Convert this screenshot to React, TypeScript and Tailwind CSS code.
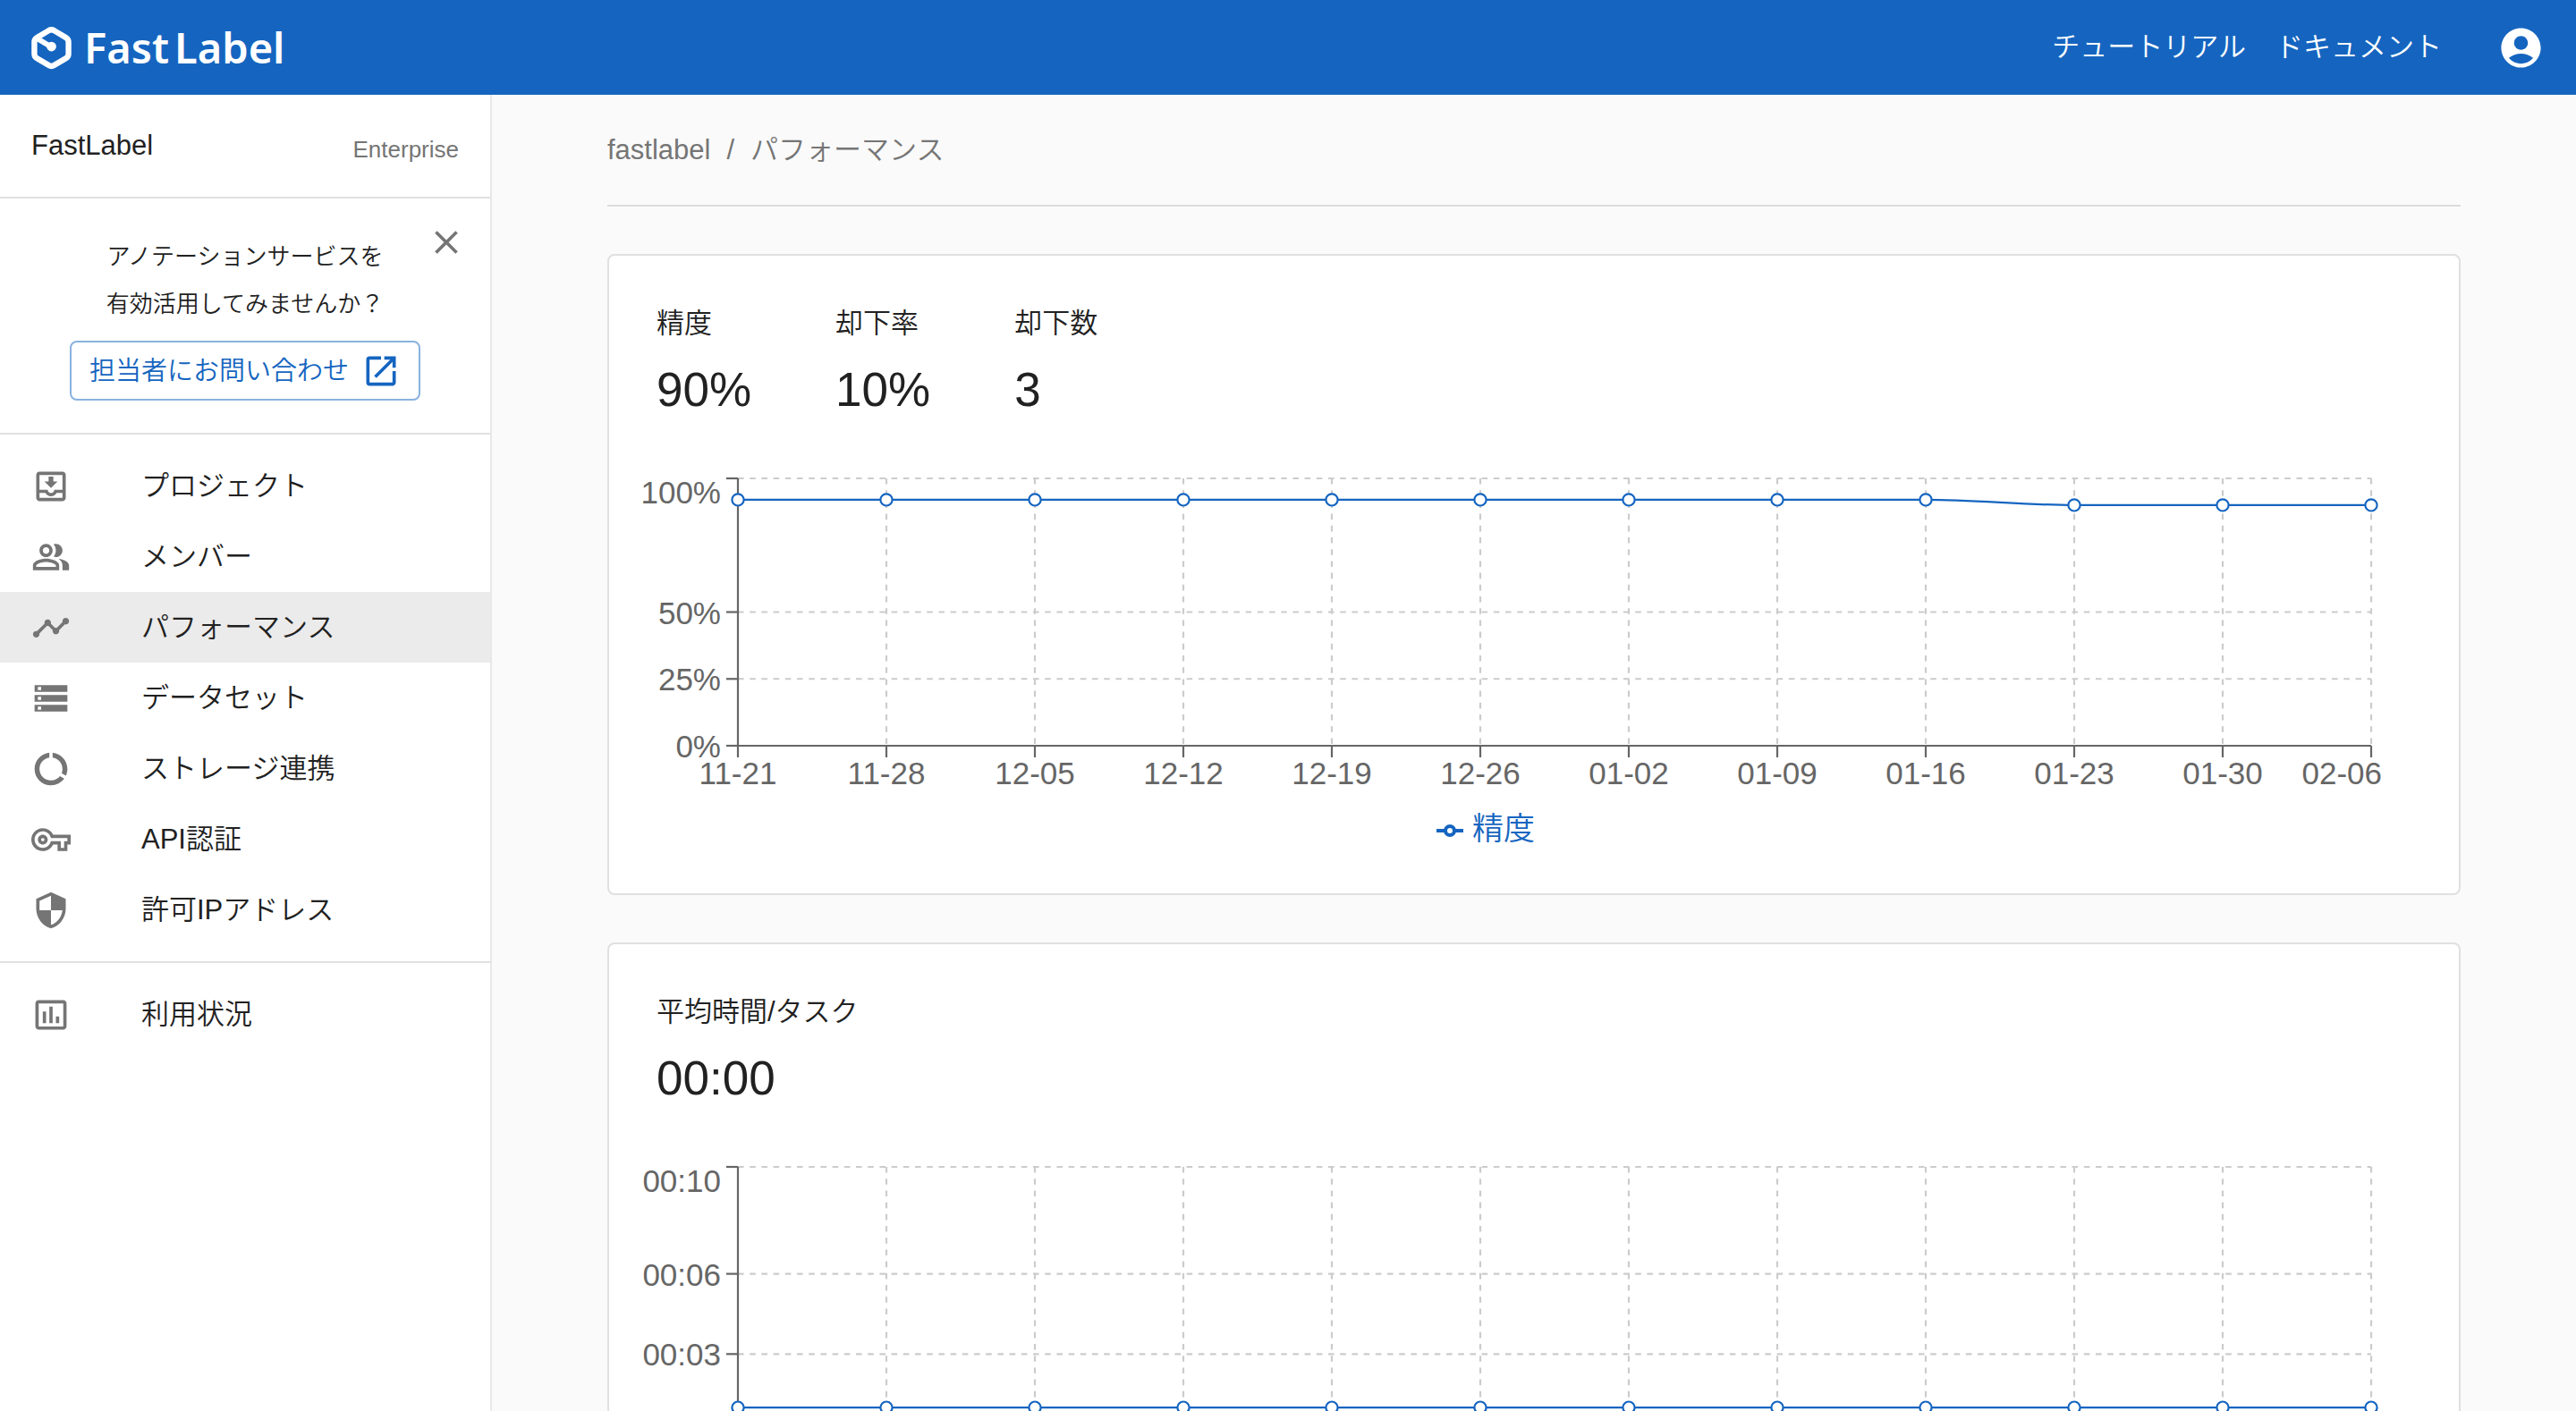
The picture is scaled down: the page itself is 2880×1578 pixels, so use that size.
import React from "react";
import type { IconType } from "react-icons";
import {
  MdAccountCircle,
  MdClose,
  MdDataUsage,
  MdInsertChartOutlined,
  MdOpenInNew,
  MdOutlineMoveToInbox,
  MdOutlinePeopleAlt,
  MdOutlineVpnKey,
  MdSecurity,
  MdStorage,
  MdTimeline,
} from "react-icons/md";

type NavItem = { label: string; icon: IconType; active?: boolean };

const mainNav: NavItem[] = [
  { label: "プロジェクト", icon: MdOutlineMoveToInbox },
  { label: "メンバー", icon: MdOutlinePeopleAlt },
  { label: "パフォーマンス", icon: MdTimeline, active: true },
  { label: "データセット", icon: MdStorage },
  { label: "ストレージ連携", icon: MdDataUsage },
  { label: "API認証", icon: MdOutlineVpnKey },
  { label: "許可IPアドレス", icon: MdSecurity },
];

const usageNav: NavItem[] = [{ label: "利用状況", icon: MdInsertChartOutlined }];

const dates = [
  "11-21", "11-28", "12-05", "12-12", "12-19", "12-26",
  "01-02", "01-09", "01-16", "01-23", "01-30", "02-06",
];

function Logo() {
  return (
    <a href="#home" aria-label="FastLabel" className="flex items-center gap-[14px] text-white">
      <svg viewBox="0 0 46 50" className="h-[49px] w-[45px]" fill="none" stroke="currentColor">
        <path
          d="M20 5.200 6.500 13.300Q3.500 15 3.500 18.500V32Q3.500 35.300 6.500 37L20 45Q23 46.800 26 45L39.500 37Q42.500 35.300 42.500 32V18.500Q42.500 15 39.500 13.300L26 5.200Q23 3.500 20 5.200Z"
          strokeWidth="6.500"
          strokeLinejoin="round"
        />
        <path d="M7 14.500 22 23.500" strokeWidth="6" />
        <circle cx="23" cy="23.500" r="5.500" fill="currentColor" stroke="none" />
      </svg>
      <span className="flex gap-[6px] font-['Noto_Sans',sans-serif] text-[47px] leading-[56px] font-semibold">
        <span>Fast</span>
        <span>Label</span>
      </span>
    </a>
  );
}

function NavList({ items, label }: { items: NavItem[]; label: string }) {
  return (
    <nav aria-label={label}>
      <ul>
        {items.map(({ label: text, icon: Icon, active }) => (
          <li key={text}>
            <a
              href="#nav"
              aria-current={active ? "page" : undefined}
              className={
                active
                  ? "flex h-[79px] items-center bg-[#ebebeb] px-[35px]"
                  : "flex h-[79px] items-center px-[35px]"
              }
            >
              <span className="w-[123px] shrink-0">
                <Icon className="size-[44px] text-[#757575]" />
              </span>
              <span className="text-[31px] leading-[46px]">{text}</span>
            </a>
          </li>
        ))}
      </ul>
    </nav>
  );
}

function Sidebar() {
  return (
    <aside className="w-[550px] shrink-0 border-r-2 border-[#e8e8e8] bg-white">
      <div className="flex items-end justify-between border-b-2 border-[#e0e0e0] px-[35px] py-[34px]">
        <p className="text-[31px] leading-[46px]">FastLabel</p>
        <p className="text-[26px] leading-[38px] text-[#757575]">Enterprise</p>
      </div>
      <div className="relative flex flex-col items-center border-b-2 border-[#e0e0e0] pt-[39px] pb-9">
        <p className="text-center text-[26px] leading-[53px]">
          アノテーションサービスを
          <br />
          有効活用してみませんか？
        </p>
        <button
          type="button"
          className="mt-[14px] flex h-[67px] items-center gap-[14px] rounded-lg border-2 border-[#8ab2df] px-5 text-[29px] leading-[50px] text-[#1565c0]"
        >
          担当者にお問い合わせ
          <MdOpenInNew className="size-[44px]" />
        </button>
        <button type="button" aria-label="閉じる" className="absolute top-[27px] right-[27px] text-[#757575]">
          <MdClose className="size-[44px]" />
        </button>
      </div>
      <div className="border-b-2 border-[#e0e0e0] py-[18px]">
        <NavList items={mainNav} label="メイン" />
      </div>
      <div className="py-[18px]">
        <NavList items={usageNav} label="利用" />
      </div>
    </aside>
  );
}

const LEFT = 144;
const RIGHT = 1970;
const TOP = 68;
const BOTTOM = 367;

type ChartProps = {
  title: string;
  max: number;
  ticks: { value: number; label: string }[];
  values: number[];
};

function LineChart({ title, max, ticks, values }: ChartProps) {
  const x = (i: number) => LEFT + i * ((RIGHT - LEFT) / (dates.length - 1));
  const y = (v: number) => BOTTOM - (v / max) * (BOTTOM - TOP);

  const path = values
    .map((v, i) => {
      if (i === 0) return `M${x(0)},${y(v)}`;
      const third = (x(i) - x(i - 1)) / 3;
      return `C${x(i - 1) + third},${y(values[i - 1])},${x(i) - third},${y(v)},${x(i)},${y(v)}`;
    })
    .join("");

  return (
    <svg viewBox="0 1 2068 531" className="block h-auto w-full" role="img" aria-label={title}>
      <g stroke="#ccc" strokeWidth="2.2" strokeDasharray="6.6 6.6">
        {ticks
          .filter((t) => t.value > 0)
          .map((t) => (
            <line key={t.label} x1={LEFT} x2={RIGHT} y1={y(t.value)} y2={y(t.value)} />
          ))}
        {dates.slice(1).map((d, i) => (
          <line key={d} x1={x(i + 1)} x2={x(i + 1)} y1={TOP} y2={BOTTOM} />
        ))}
      </g>
      <g stroke="#666" strokeWidth="2.2">
        <line x1={LEFT} x2={LEFT} y1={TOP} y2={BOTTOM} />
        <line x1={LEFT} x2={RIGHT} y1={BOTTOM} y2={BOTTOM} />
        {ticks.map((t) => (
          <line key={t.label} x1={LEFT - 13} x2={LEFT} y1={y(t.value)} y2={y(t.value)} />
        ))}
        {dates.map((d, i) => (
          <line key={d} x1={x(i)} x2={x(i)} y1={BOTTOM} y2={BOTTOM + 13} />
        ))}
      </g>
      <g fill="#666" className="text-[35px]">
        {ticks.map((t) => (
          <text key={t.label} x={LEFT - 19} y={y(t.value) + (t.value === max ? 28 : 13)} textAnchor="end">
            {t.label}
          </text>
        ))}
        {dates.map((d, i) =>
          i === dates.length - 1 ? (
            <text key={d} x={RIGHT + 12} y={BOTTOM + 43} textAnchor="end">
              {d}
            </text>
          ) : (
            <text key={d} x={x(i)} y={BOTTOM + 43} textAnchor="middle">
              {d}
            </text>
          ),
        )}
      </g>
      <path d={path} fill="none" stroke="#1565c0" strokeWidth="2.2" />
      <g fill="#fff" stroke="#1565c0" strokeWidth="2.2">
        {values.map((v, i) => (
          <circle key={dates[i]} cx={x(i)} cy={y(v)} r="6.6" />
        ))}
      </g>
      <g fill="none" stroke="#1565c0" strokeWidth="4">
        <path d="M925 462H935M945 462H955" />
        <circle cx="940" cy="462" r="5" />
      </g>
      <text x="965" y="472" fill="#1565c0" className="text-[35px]">
        {title}
      </text>
    </svg>
  );
}

type CardProps = { stats: { label: string; value: string }[]; chart: ChartProps };

function ChartCard({ stats, chart }: CardProps) {
  return (
    <section className="rounded-lg border-2 border-[#e0e0e0] bg-white">
      <dl className="flex gap-[94px] px-[53px] pt-[54px]">
        {stats.map((s) => (
          <div key={s.label} className="flex flex-col gap-5">
            <dt className="text-[31px] leading-[44px]">{s.label}</dt>
            <dd className="text-[53px] leading-[64px]">{s.value}</dd>
          </div>
        ))}
      </dl>
      <LineChart {...chart} />
    </section>
  );
}

export default function App() {
  return (
    <div
      lang="ja"
      className="flex h-screen flex-col overflow-hidden bg-[#fafafa] font-['Liberation_Sans','Noto_Sans_CJK_JP',sans-serif] font-[350] text-[#212121]"
    >
      <header className="flex h-[106px] shrink-0 items-center justify-between bg-[#1565c0] px-[35px] text-white">
        <Logo />
        <div className="flex items-center">
          <nav aria-label="ヘルプ" className="flex gap-[33px] text-[31px] leading-[46px]">
            <a href="#tutorial">チュートリアル</a>
            <a href="#docs">ドキュメント</a>
          </nav>
          <button type="button" aria-label="アカウント" className="ml-[62px]">
            <MdAccountCircle className="size-[53px]" />
          </button>
        </div>
      </header>
      <div className="flex min-h-0 flex-1">
        <Sidebar />
        <main className="min-w-0 flex-1 overflow-y-auto px-[129px] [scrollbar-width:none]">
          <nav
            aria-label="パンくず"
            className="flex gap-[18px] border-b-2 border-[#dcdcdc] pt-[39px] pb-[38px] text-[31px] leading-[46px] text-[#757575]"
          >
            <a href="#fastlabel">fastlabel</a>
            <span>/</span>
            <span>パフォーマンス</span>
          </nav>
          <div className="flex flex-col gap-[53px] py-[53px]">
            <ChartCard
              stats={[
                { label: "精度", value: "90%" },
                { label: "却下率", value: "10%" },
                { label: "却下数", value: "3" },
              ]}
              chart={{
                title: "精度",
                max: 100,
                ticks: [
                  { value: 100, label: "100%" },
                  { value: 50, label: "50%" },
                  { value: 25, label: "25%" },
                  { value: 0, label: "0%" },
                ],
                values: [92, 92, 92, 92, 92, 92, 92, 92, 92, 90, 90, 90],
              }}
            />
            <ChartCard
              stats={[{ label: "平均時間/タスク", value: "00:00" }]}
              chart={{
                title: "平均時間/タスク",
                max: 10,
                ticks: [
                  { value: 10, label: "00:10" },
                  { value: 6, label: "00:06" },
                  { value: 3, label: "00:03" },
                  { value: 0, label: "00:00" },
                ],
                values: [1, 1, 1, 1, 1, 1, 1, 1, 1, 1, 1, 1],
              }}
            />
          </div>
        </main>
      </div>
    </div>
  );
}
